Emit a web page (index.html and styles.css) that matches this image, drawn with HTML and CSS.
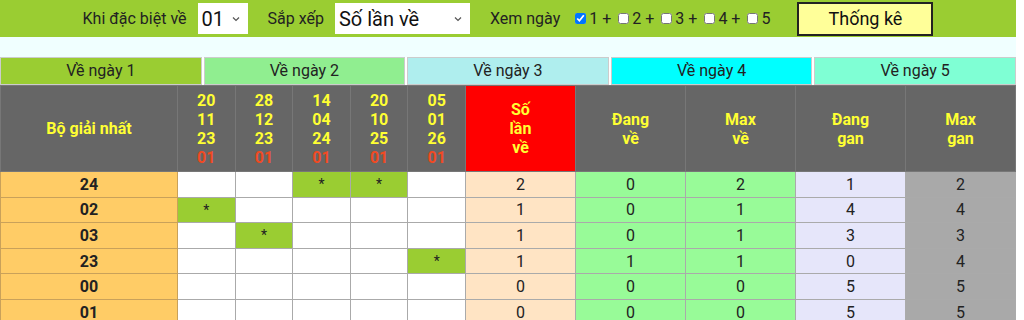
FILE: index.html
```html
<!DOCTYPE html>
<html lang="vi">
<head>
  <meta charset="UTF-8" />
  <meta name="viewport" content="width=device-width, initial-scale=1.0"/>
  <title>Thống kê giải nhất</title>
  <link rel="stylesheet" href="styles.css">
</head>
<body>
<div class="page">

  <!-- Toolbar -->
  <form class="toolbar">
    <div class="field">
      <span>Khi đặc biệt về</span>
      <div class="sel sel-num">
        <select><option>01</option></select>
        <svg class="chev" width="8" height="6" viewBox="0 0 8 6"><path d="M1 1.5 L4 4.5 L7 1.5" fill="none" stroke="#555" stroke-width="1.2"/></svg>
      </div>
    </div>
    <div class="field">
      <span>Sắp xếp</span>
      <div class="sel sel-sort">
        <select><option>Số lần về</option></select>
        <svg class="chev" width="8" height="6" viewBox="0 0 8 6"><path d="M1 1.5 L4 4.5 L7 1.5" fill="none" stroke="#555" stroke-width="1.2"/></svg>
      </div>
    </div>
    <div class="field days">
      <span>Xem ngày</span>
      <div class="checks">
        <label><input type="checkbox" checked>1 +</label>
        <label><input type="checkbox">2 +</label>
        <label><input type="checkbox">3 +</label>
        <label><input type="checkbox">4 +</label>
        <label><input type="checkbox">5</label>
      </div>
    </div>
    <button type="button" class="submit">Thống kê</button>
  </form>

  <div class="band"></div>

  <!-- Legend tabs -->
  <div class="tabs">
    <div class="tab t1">Về ngày 1</div>
    <div class="tab t2">Về ngày 2</div>
    <div class="tab t3">Về ngày 3</div>
    <div class="tab t4">Về ngày 4</div>
    <div class="tab t5">Về ngày 5</div>
  </div>

  <!-- Stats table -->
  <table class="stats">
    <colgroup>
      <col class="c-name">
      <col class="c-day"><col class="c-day"><col class="c-day"><col class="c-day"><col class="c-day">
      <col class="c-num"><col class="c-num"><col class="c-num"><col class="c-num"><col class="c-num">
    </colgroup>
    <thead>
      <tr>
        <th>Bộ giải nhất</th>
        <th class="date">20<br>11<br>23<br><span class="yy">01</span></th>
        <th class="date">28<br>12<br>23<br><span class="yy">01</span></th>
        <th class="date">14<br>04<br>24<br><span class="yy">01</span></th>
        <th class="date">20<br>10<br>25<br><span class="yy">01</span></th>
        <th class="date">05<br>01<br>26<br><span class="yy">01</span></th>
        <th class="sorted">Số<br>lần<br>về</th>
        <th>Đang<br>về</th>
        <th>Max<br>về</th>
        <th>Đang<br>gan</th>
        <th>Max<br>gan</th>
      </tr>
    </thead>
    <tbody>
      <tr>
        <td class="name">24</td>
        <td></td><td></td><td class="hit">*</td><td class="hit">*</td><td></td>
        <td class="cnt">2</td><td class="cur">0</td><td class="cur">2</td><td class="gan">1</td><td class="mgan">2</td>
      </tr>
      <tr>
        <td class="name">02</td>
        <td class="hit">*</td><td></td><td></td><td></td><td></td>
        <td class="cnt">1</td><td class="cur">0</td><td class="cur">1</td><td class="gan">4</td><td class="mgan">4</td>
      </tr>
      <tr>
        <td class="name">03</td>
        <td></td><td class="hit">*</td><td></td><td></td><td></td>
        <td class="cnt">1</td><td class="cur">0</td><td class="cur">1</td><td class="gan">3</td><td class="mgan">3</td>
      </tr>
      <tr>
        <td class="name">23</td>
        <td></td><td></td><td></td><td></td><td class="hit">*</td>
        <td class="cnt">1</td><td class="cur">1</td><td class="cur">1</td><td class="gan">0</td><td class="mgan">4</td>
      </tr>
      <tr>
        <td class="name">00</td>
        <td></td><td></td><td></td><td></td><td></td>
        <td class="cnt">0</td><td class="cur">0</td><td class="cur">0</td><td class="gan">5</td><td class="mgan">5</td>
      </tr>
      <tr>
        <td class="name">01</td>
        <td></td><td></td><td></td><td></td><td></td>
        <td class="cnt">0</td><td class="cur">0</td><td class="cur">0</td><td class="gan">5</td><td class="mgan">5</td>
      </tr>
    </tbody>
  </table>

</div>
</body>
</html>
```

FILE: styles.css
```css
* {
  box-sizing: border-box;
  margin: 0;
  padding: 0;
}

body {
  font-family: Roboto, "Noto Sans", Arial, sans-serif;
  background: #fff;
  color: #222;
}

.page {
  width: 1016px;
}

/* toolbar */
.toolbar {
  height: 37px;
  background: #9acd32;
  display: flex;
  align-items: center;
  justify-content: center;
  gap: 20px;
  font-size: 16px;
  color: #222;
}

.field {
  display: flex;
  align-items: center;
  gap: 11px;
}

.sel {
  display: flex;
  align-items: center;
  height: 31px;
  background: #fff;
  padding-right: 8px;
}

.sel select {
  appearance: none;
  -webkit-appearance: none;
  border: none;
  background: transparent;
  font-family: inherit;
  font-size: 20px;
  color: #111;
  padding-left: 4px;
  flex: 1;
  outline: none;
}

.sel-num { width: 50px; }
.sel-sort { width: 135px; }

.days {
  gap: 15px;
}

.checks {
  display: flex;
  gap: 7px;
}

.checks label {
  display: flex;
  align-items: center;
  gap: 3px;
}

.checks input {
  width: 11px;
  height: 11px;
  margin: 0;
}

.submit {
  margin-left: 7px;
  width: 136px;
  height: 34px;
  background: #ffff99;
  border: 2px solid #222;
  font-family: inherit;
  font-size: 18px;
  color: #111;
  cursor: pointer;
}

.band {
  height: 20px;
  background: #f0ffff;
}

/* legend tabs */
.tabs {
  display: flex;
  gap: 2px;
  height: 28px;
}

.tab {
  flex: 1;
  border: 1px solid #ccc;
  text-align: center;
  font-size: 16px;
  line-height: 26px;
  color: #222;
}

.t1 { background: #9acd32; }
.t2 { background: #90ee90; }
.t3 { background: #afeeee; }
.t4 { background: #00ffff; }
.t5 { background: #7fffd4; }

/* stats table */
.stats {
  width: 1016px;
  border-collapse: collapse;
  table-layout: fixed;
  font-size: 16px;
}

.c-name { width: 177px; }
.c-day { width: 57.6px; }
.c-num { width: 110px; }

.stats th {
  height: 86px;
  background: #666;
  color: #ffff33;
  font-weight: bold;
  line-height: 19px;
  border: 1px solid #777;
}

.stats th.sorted {
  background: #ff0000;
}

.stats .yy {
  color: #f04a23;
}

.stats td {
  height: 25.6px;
  text-align: center;
  border: 1px solid #aaa;
  background: #fff;
}

.stats td.name {
  background: #ffcc66;
  font-weight: bold;
  border-color: #c9a15a;
}

.stats td.hit {
  background: #9acd32;
  font-size: 14px;
  vertical-align: middle;
}

.stats td.cnt { background: #ffe4c4; }
.stats td.cur { background: #98fb98; }
.stats td.gan { background: #e6e6fa; }
.stats td.mgan { background: #a9a9a9; }
```
